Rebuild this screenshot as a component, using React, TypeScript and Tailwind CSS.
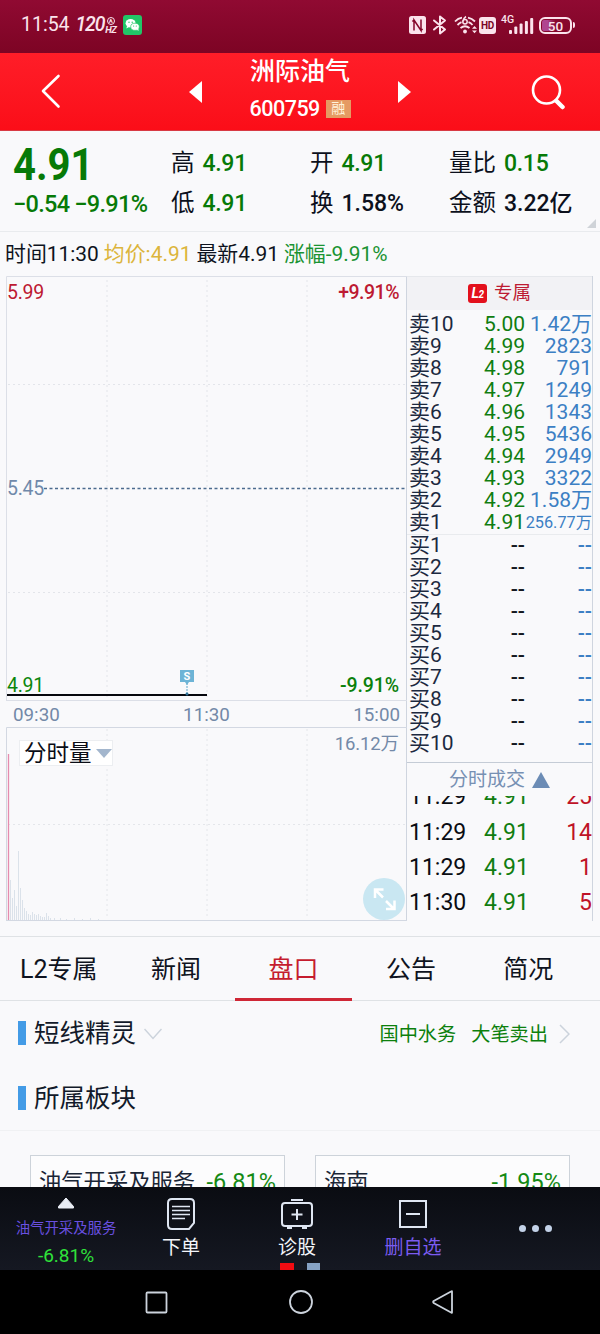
import type { ReactNode } from 'react';

const asks = [
  ['10', '5.00', '1.42万'],
  ['9', '4.99', '2823'],
  ['8', '4.98', '791'],
  ['7', '4.97', '1249'],
  ['6', '4.96', '1343'],
  ['5', '4.95', '5436'],
  ['4', '4.94', '2949'],
  ['3', '4.93', '3322'],
  ['2', '4.92', '1.58万'],
  ['1', '4.91', '256.77万'],
];

const bids = ['1', '2', '3', '4', '5', '6', '7', '8', '9', '10'];

const trades = [
  ['11:29', '4.91', '25'],
  ['11:29', '4.91', '14'],
  ['11:29', '4.91', '1'],
  ['11:30', '4.91', '5'],
];

const tabs = ['L2专属', '新闻', '盘口', '公告', '简况'];

// [x, height] of the pale volume bars
const volumes = [
  [4, 40], [6, 22], [8, 30], [10, 14], [12, 69], [14, 32], [16, 20], [18, 12],
  [20, 9], [22, 6], [24, 5], [26, 8], [28, 6], [30, 5], [32, 6], [34, 4],
  [36, 3], [38, 3], [40, 7], [42, 4], [44, 2], [48, 2], [54, 2], [60, 1],
  [68, 2], [76, 1], [84, 2], [92, 1],
];

function StatusBar() {
  return (
    <div className="h-[53px] flex items-center justify-between pl-[21px] pr-[25px] pb-[3px] bg-linear-to-b from-[#900a32] to-[#7d0424] text-[#fbe3ec]">
      <div className="flex items-center">
        <span className="text-[19.5px] leading-none">11:54</span>
        <span className="ml-[6px] text-[19.5px] leading-none italic font-medium tracking-[-1.2px]">120</span>
        <div className="w-[13px] flex flex-col items-center">
          <span className="size-[8px] rounded-full border border-[#fbe3ec] text-[6px] leading-[6px] text-center font-bold">A</span>
          <span className="text-[9.5px] leading-[9px] italic font-bold tracking-[-0.5px]">HZ</span>
        </div>
        <svg className="ml-[6px]" width="19" height="20" viewBox="0 0 19 20">
          <rect width="19" height="20" rx="3" fill="#22c567" />
          <ellipse cx="7.6" cy="8.3" rx="5" ry="4.2" fill="#fff" />
          <path d="M4 11l-.6 2.4 2.6-1.3z" fill="#fff" />
          <ellipse cx="12" cy="11.8" rx="4.3" ry="3.6" fill="#fff" stroke="#22c567" strokeWidth=".7" />
          <path d="M13.6 14.5l2 1.5-.3-2.3z" fill="#fff" />
          <g fill="#22c567">
            <circle cx="6" cy="7.2" r=".7" />
            <circle cx="9.2" cy="7.2" r=".7" />
            <circle cx="10.6" cy="11" r=".6" />
            <circle cx="13.3" cy="11" r=".6" />
          </g>
        </svg>
      </div>

      <div className="flex items-center">
        {/* NFC */}
        <svg width="17" height="18" viewBox="0 0 17 18">
          <rect width="17" height="18" rx="2.5" fill="#fbe3ec" />
          <path d="M5 14.5V4l7 10.5V3.5M5 4L3.4 5.5M12 14.5l1.6-1.5" fill="none" stroke="#85062a" strokeWidth="1.5" />
        </svg>
        {/* Bluetooth */}
        <svg className="ml-[6px]" width="16" height="20" viewBox="0 0 16 20" fill="none" stroke="#fbe3ec" strokeWidth="2" strokeLinejoin="round" strokeLinecap="round">
          <path d="M2 5.500l11 9L8 18.500v-17l5 4-11 9" />
        </svg>
        {/* Wi-Fi 6 */}
        <svg className="ml-[6px]" width="24" height="20" viewBox="0 0 24 20" fill="none" stroke="#fbe3ec" strokeWidth="1.800">
          <path d="M1 6.500Q4 3.200 8 2.600M14 2.600Q18 3.500 21 6.500M3.500 10Q5.500 8 7.500 7.200M14.500 7.200Q17 8.200 18.500 10M6.500 13Q11 9.500 15.500 13" />
          <circle cx="11" cy="6.700" r="2.200" strokeWidth="1.500" />
          <path d="M9 6.500Q9.500 3 12 1.500" strokeWidth="1.500" />
          <circle cx="11" cy="16.500" r="1.900" fill="#fbe3ec" stroke="none" />
          <path d="M18 13.800l2.500-2.800 2.500 2.800zM18 15.500l2.500 2.800 2.500-2.800z" fill="#fbe3ec" stroke="none" />
        </svg>
        <span className="ml-px w-[17px] h-[17px] rounded-[3px] bg-[#fbe3ec] text-[#7c0626] text-[10px] leading-[17px] font-bold text-center tracking-[-0.3px]">HD</span>
        {/* Signal */}
        <div className="ml-[5px] w-[33px] h-[19px] relative">
          <svg width="33" height="19" viewBox="0 0 33 19" fill="#fbe3ec">
            <rect x="8" y="14" width="3" height="4" rx="1" />
            <rect x="13.300" y="10.500" width="3" height="7.500" rx="1" />
            <rect x="18.600" y="7.500" width="3" height="10.500" rx="1" />
            <rect x="23.900" y="5" width="3" height="13" rx="1" />
            <rect x="29.200" y="2" width="3" height="16" rx="1" />
          </svg>
          <span className="absolute left-0 -top-px text-[10.500px] leading-[10px] font-medium">4G</span>
        </div>
        {/* Battery */}
        <div className="ml-[5px] w-[33px] h-[17px] rounded-[6px] border-2 border-[#fbe3ec] p-px">
          <div className="h-full rounded-[2px] bg-linear-to-r from-[#b04490] from-20% to-transparent to-50% text-[13.500px] leading-[12px] font-medium text-center">
            50
          </div>
        </div>
        <span className="ml-px w-[2px] h-[6px] rounded-r bg-[#fbe3ec]" />
      </div>
    </div>
  );
}

function Header() {
  return (
    <div className="h-[78px] flex items-center bg-linear-to-b from-[#ff1d28] to-[#fb0d18] border-b border-[#d83a44] text-white">
      <svg className="ml-[39px]" width="22" height="36" viewBox="0 0 22 36" fill="none" stroke="#fff" strokeWidth="2.600" strokeLinecap="round">
        <path d="M19.500 2L4 17l15.500 15.500" strokeLinejoin="round" />
      </svg>
      <svg className="ml-[128px]" width="14" height="22" viewBox="0 0 14 22" fill="#fff">
        <path d="M13 0v22L0 11z" />
      </svg>
      <div className="ml-[45px] w-[104px] flex flex-col items-center">
        <h1 className="-mt-[2px] text-[25px] leading-[32px] font-medium">洲际油气</h1>
        <div className="mt-[4px] w-[101px] h-[34px] flex items-center">
          <span className="text-[21.500px] leading-none font-medium tracking-[-0.500px]">600759</span>
          <span className="ml-[6px] w-[25px] h-[18px] shrink-0 bg-[#e59a63] text-[14px] leading-[17px] text-center text-[#fff3dc]">融</span>
        </div>
      </div>
      <svg className="ml-[46px]" width="13" height="22" viewBox="0 0 13 22" fill="#fff">
        <path d="M0 0v22L13 11z" />
      </svg>
      <svg className="ml-[120px]" width="36" height="36" viewBox="0 0 36 36" fill="none" stroke="#fff">
        <circle cx="15.500" cy="16" r="13.500" strokeWidth="2.600" />
        <path d="M25.500 27l6 6" strokeWidth="4.500" strokeLinecap="round" />
      </svg>
    </div>
  );
}

function Stat({ label, children, dark }: { label: string; children: ReactNode; dark?: boolean }) {
  return (
    <div className="h-[40px] flex items-center whitespace-nowrap">
      <span className="text-[23.500px]">{label}</span>
      <span className={dark ? 'ml-[8px] text-[23px] font-medium' : 'ml-[8px] text-[23px] font-medium text-[#077a07] tracking-[-0.300px]'}>
        {children}
      </span>
    </div>
  );
}

function Quote() {
  return (
    <div className="relative h-[101px] flex pt-[13px] border-b border-[#e9ebee] text-[#0c101c]">
      <div className="ml-[13px] w-[158px] text-[#077a07] font-medium whitespace-nowrap">
        <div className="h-[42px] text-[45px] leading-[42px] font-bold origin-left scale-x-[0.89]">4.91</div>
        <div className="mt-[4px] text-[23.500px] leading-[28px] tracking-[-0.700px]">
          <span>−0.54</span>
          <span className="ml-[5px]">−9.91%</span>
        </div>
      </div>
      <div className="w-[139px]">
        <Stat label="高">4.91</Stat>
        <Stat label="低">4.91</Stat>
      </div>
      <div className="w-[138px]">
        <Stat label="开">4.91</Stat>
        <Stat label="换" dark>1.58%</Stat>
      </div>
      <div className="pl-px">
        <Stat label="量比">0.15</Stat>
        <Stat label="金额" dark>3.22亿</Stat>
      </div>
      <svg className="absolute right-[4px] bottom-[3px]" width="9" height="9" viewBox="0 0 9 9">
        <path d="M9 0v9H0z" fill="#cfd3d8" />
      </svg>
    </div>
  );
}

function PriceChart() {
  return (
    <div className="relative h-[425px] text-[19.500px] leading-[20px]">
      <svg className="block" width="401" height="425" viewBox="0 0 401 425" fill="none">
        <path d="M.5 425V.5H401M.5 424.500H401" stroke="#dcdfe7" />
        <path d="M101 4v420M201 4v420M301 4v420M2 108.500h398M2 316.500h398" stroke="#e3e5ea" strokeDasharray="2 3" />
        <path d="M38 212.500h362" stroke="#4c6b8e" strokeWidth="1.500" strokeDasharray="3 2.500" />
        <path d="M1 419h200" stroke="#06070d" strokeWidth="2" />
        <path d="M181 407v11" stroke="#5fa9cc" strokeDasharray="2 1" />
        <path d="M174 394h14v12h-5l-2 3-2-3h-5z" fill="#6db4d6" />
        <circle cx="181" cy="418" r="1.500" fill="#2c6f96" />
      </svg>
      <span className="absolute left-[175px] top-[395px] w-[12px] text-center text-[11px] leading-[11px] font-bold text-white">S</span>
      <span className="absolute left-px top-[7px] text-[#bd1a32] tracking-[-0.300px]">5.99</span>
      <span className="absolute right-[7px] top-[7px] text-[#bd1a32] font-medium tracking-[-0.500px]">+9.91%</span>
      <span className="absolute left-px top-[203px] text-[#7089aa] tracking-[-0.300px]">5.45</span>
      <span className="absolute left-px top-[400px] text-[#0b860b] tracking-[-0.300px]">4.91</span>
      <span className="absolute right-[7px] top-[400px] text-[#0b800b] font-medium tracking-[-0.100px]">-9.91%</span>
    </div>
  );
}

function VolumeChart() {
  return (
    <div className="relative h-[194px] text-[#7389a8]">
      <svg className="block" width="401" height="194" viewBox="0 0 401 194" fill="none">
        <path d="M.5 194V.5H401M.5 193.500H401" stroke="#d3d8e2" />
        <path d="M101 2v190M201 2v190M301 2v190M2 97.500h398" stroke="#e4e6ea" strokeDasharray="2 3" />
        <path d="M2.500 27v166" stroke="#e58bae" strokeWidth="1.300" />
        {volumes.map(([x, h]) => (
          <rect key={x} x={x} y={193 - h} width="1" height={h} fill="#dbe2ea" />
        ))}
      </svg>
      <div className="absolute left-[13px] top-[13px] w-[94px] h-[26px] flex items-center border border-[#eceef1] bg-white pl-[4px] whitespace-nowrap">
        <span className="text-[22.500px] leading-none text-[#0a0d16]">分时量</span>
        <svg className="ml-[4px] shrink-0" width="16" height="9" viewBox="0 0 16 9">
          <path d="M0 0h16L8 9z" fill="#a3b6cd" />
        </svg>
      </div>
      <span className="absolute right-[7px] top-[6px] text-[18.500px] leading-[22px] tracking-[-0.100px]">16.12万</span>
      <svg className="absolute right-px bottom-px" width="42" height="42" viewBox="0 0 42 42">
        <circle cx="21" cy="21" r="21" fill="#c9e7f2" />
        <g fill="none" stroke="#fff" strokeWidth="2.500">
          <path d="M12 20v-8.500h8.500M12 11.500l8 8M23 23l8 8M31.500 22.500V31H23" />
        </g>
      </svg>
    </div>
  );
}

function OrderBook() {
  return (
    <div className="w-[187px] flex flex-col border-x border-[#cfd5df] text-[21px]">
      <div className="h-[34px] shrink-0 flex items-center justify-center bg-[#f2f2f5] border-t border-[#e6e8ec] text-[#bd1a32]">
        <span className="w-[19px] h-[19px] rounded-[3px] bg-[#e3101c] text-white text-[14px] leading-[19px] text-center font-bold italic tracking-[-0.500px]">
          L<span className="text-[10px]">2</span>
        </span>
        <span className="ml-[7px] text-[18.500px]">专属</span>
      </div>

      <div className="pt-[3px] h-[225px] shrink-0 border-b border-[#e9ebee] pl-[2px]">
        {asks.map(([level, price, amount]) => (
          <div key={level} className="h-[22.100px] flex items-center whitespace-nowrap leading-none">
            <span className="w-[59px] text-[#1c2940]">卖{level}</span>
            <span className="w-[57px] text-right text-[#107d10]">{price}</span>
            <span className={amount.length > 6 ? 'flex-1 text-right text-[16.300px] text-[#3c7fc4]' : 'flex-1 text-right text-[#3c7fc4]'}>
              {amount}
            </span>
          </div>
        ))}
      </div>
      <div className="-mt-px h-[229px] shrink-0 border-b border-[#c5ccd6] pl-[2px]">
        {bids.map((level) => (
          <div key={level} className="h-[22.100px] flex items-center leading-none">
            <span className="w-[59px] text-[#1c2940]">买{level}</span>
            <span className="w-[57px] text-right text-[#14181f] font-medium">--</span>
            <span className="flex-1 text-right text-[#3c7fc4] font-medium">--</span>
          </div>
        ))}
      </div>

      <div className="h-[33px] shrink-0 flex items-center justify-center text-[#7790b3]">
        <span className="text-[19px] leading-[28px]">分时成交</span>
        <svg className="ml-[7px]" width="18" height="16" viewBox="0 0 18 16">
          <path d="M9 0l9 16H0z" fill="#6c8cb5" />
        </svg>
      </div>
      <div className="flex-1 min-h-0 overflow-hidden flex flex-col justify-end">
        {trades.map(([time, price, amount], i) => (
          <div key={i} className="h-[35.300px] shrink-0 flex items-center pl-[2px] text-[23px]">
            <span className="w-[75px] text-[#0a0c12]">{time}</span>
            <span className="text-[#107d10]">{price}</span>
            <span className="flex-1 text-right text-[#bf1327]">{amount}</span>
          </div>
        ))}
      </div>
    </div>
  );
}

function Tabs() {
  return (
    <div className="h-[65px] flex border-y border-[#dfe2e5] pr-[13px] text-[25px] text-[#0e1320]">
      {tabs.map((tab) => (
        <div
          key={tab}
          className={
            tab === '盘口'
              ? 'flex-1 -mb-px flex items-center justify-center border-b-[3px] border-[#cf2736] text-[#c51c2e] pt-[4px]'
              : 'flex-1 flex items-center justify-center pt-[2px]'
          }
        >
          {tab}
        </div>
      ))}
    </div>
  );
}

function SectionTitle({ children }: { children: ReactNode }) {
  return (
    <div className="flex items-center">
      <span className="w-[8px] h-[24px] -mt-[2px] bg-[#439be6]" />
      <h2 className="ml-[8px] text-[25.500px] leading-none text-[#121a2a]">{children}</h2>
    </div>
  );
}

function Sector({ name, change }: { name: string; change: string }) {
  return (
    <div className="w-[255px] h-[56px] flex items-center justify-between px-[8px] border border-[#cdd3da] bg-[#fcfcfd] text-[22.300px] whitespace-nowrap">
      <span className="text-[#1a2536]">{name}</span>
      <span className="text-[#148a14] text-[23.500px]">{change}</span>
    </div>
  );
}

function BottomBar() {
  return (
    <div className="relative h-[83px] shrink-0 flex bg-linear-to-b from-[#0a0c12] to-[#151822] text-[19px] text-[#f3f5fa]">
      <div className="w-[123px] pl-[9px] pt-[10px] flex flex-col items-center">
        <svg width="18" height="12" viewBox="0 0 17 12">
          <path d="M8.500 1L16 9.500v1.500H1V9.500z" fill="#e9edf5" stroke="#e9edf5" strokeLinejoin="round" />
        </svg>
        <span className="mt-[10px] text-[14.400px] leading-[20px] text-[#6a50e0]">油气开采及服务</span>
        <span className="mt-[5px] leading-[24px] text-[#2fe23a]">-6.81%</span>
      </div>
      <div className="w-[116px] pt-[11px] flex flex-col items-center">
        <svg width="28" height="32" viewBox="0 0 28 32" fill="none" stroke="#dfe6f2" strokeWidth="2">
          <path d="M5 1h18q4 0 4 4v20l-5 6H5q-4 0-4-4V5q0-4 4-4z" />
          <path d="M5 8.500h18M5 12.500h18M5 16.500h18M5 20.500h13" strokeWidth="1.600" />
        </svg>
        <span className="mt-[4px] leading-[28px]">下单</span>
      </div>
      <div className="w-[116px] pt-[11px] flex flex-col items-center">
        <svg width="32" height="32" viewBox="0 0 32 32" fill="none" stroke="#dfe6f2" strokeWidth="2">
          <rect x="1" y="5" width="30" height="23" rx="3" />
          <path d="M10 2h12M6 30h5M21 30h5M16 11v11M10.500 16.500h11" />
        </svg>
        <span className="mt-[4px] leading-[28px]">诊股</span>
      </div>
      <div className="w-[116px] pt-[11px] flex flex-col items-center">
        <svg width="28" height="32" viewBox="0 0 28 32" fill="none" stroke="#dfe6f2" strokeWidth="2">
          <rect x="1" y="3" width="26" height="26" />
          <path d="M7 16h14" />
        </svg>
        <span className="mt-[4px] leading-[28px] text-[#7b5cf0]">删自选</span>
      </div>
      <div className="flex-1 flex items-center justify-center gap-[6px]">
        <span className="size-[7px] rounded-full bg-[#c3d2e8]" />
        <span className="size-[7px] rounded-full bg-[#c3d2e8]" />
        <span className="size-[7px] rounded-full bg-[#c3d2e8]" />
      </div>
      <div className="absolute left-[280px] bottom-0 flex gap-[13px]">
        <span className="w-[14px] h-[7px] bg-[#f30c12]" />
        <span className="w-[13px] h-[7px] bg-[#86a2c4]" />
      </div>
    </div>
  );
}

function SystemNav() {
  return (
    <div className="h-[64px] shrink-0 flex items-center justify-center gap-[121px] bg-black pr-px">
      <svg width="23" height="23" viewBox="0 0 23 23" fill="none" stroke="#ccd3dc" strokeWidth="1.800">
        <rect x="1.500" y="1.500" width="20" height="20" rx="1" />
      </svg>
      <svg width="24" height="24" viewBox="0 0 24 24" fill="none" stroke="#ccd3dc" strokeWidth="1.800">
        <circle cx="12" cy="12" r="11" />
      </svg>
      <svg className="-ml-[2px]" width="22" height="24" viewBox="0 0 22 24" fill="none" stroke="#ccd3dc" strokeWidth="1.800" strokeLinejoin="round">
        <path d="M20 1.500v21q0 .5-.5.2L1.700 13q-1-1 0-2L19.500 1.300q.5-.3.500.2z" />
      </svg>
    </div>
  );
}

export default function App() {
  return (
    <div className="w-[600px] h-[1334px] flex flex-col overflow-hidden bg-[#f9f9fb] font-['Roboto','Noto_Sans_CJK_SC',sans-serif]">
      <StatusBar />
      <Header />
      <Quote />

      <div className="h-[44px] flex items-center pt-[2px] pl-[5px] gap-[5px] text-[20.900px] text-[#0e1320] whitespace-nowrap">
        <span>时间11:30</span>
        <span className="text-[#dcb53c]">均价:4.91</span>
        <span>最新4.91</span>
        <span className="text-[#1a9332]">涨幅-9.91%</span>
      </div>

      <div className="h-[645px] flex pl-[6px]">
        <div className="w-[400px]">
          <PriceChart />
          <div className="h-[26px] flex items-center justify-between pl-[7px] pr-[6px] pt-[2px] text-[18.800px] text-[#7389a8]">
            <span>09:30</span>
            <span>11:30</span>
            <span>15:00</span>
          </div>
          <VolumeChart />
        </div>
        <OrderBook />
      </div>

      <div className="h-[15px] shrink-0" />
      <Tabs />

      <div className="flex-1 min-h-0 overflow-hidden">
        <div className="h-[65px] flex items-center pl-[18px] pr-[30px]">
          <SectionTitle>短线精灵</SectionTitle>
          <svg className="ml-[8px]" width="18" height="12" viewBox="0 0 18 12" fill="none" stroke="#ccd3dc" strokeWidth="1.500">
            <path d="M.5 1L9 10.500 17.500 1" />
          </svg>
          <div className="ml-auto flex items-center gap-[15px] pt-[3px] text-[19.200px] text-[#0c800c]">
            <span>国中水务</span>
            <span>大笔卖出</span>
          </div>
          <svg className="ml-[11px]" width="11" height="20" viewBox="0 0 11 20" fill="none" stroke="#ccd3dc" strokeWidth="1.500">
            <path d="M1 1l9 9-9 9" />
          </svg>
        </div>
        <div className="h-[65px] flex items-center pl-[18px] pt-px border-b border-[#f0f1f3]">
          <SectionTitle>所属板块</SectionTitle>
        </div>
        <div className="flex gap-[30px] pl-[30px] pt-[24px]">
          <Sector name="油气开采及服务" change="-6.81%" />
          <Sector name="海南" change="-1.95%" />
        </div>
      </div>

      <BottomBar />
      <SystemNav />
    </div>
  );
}
